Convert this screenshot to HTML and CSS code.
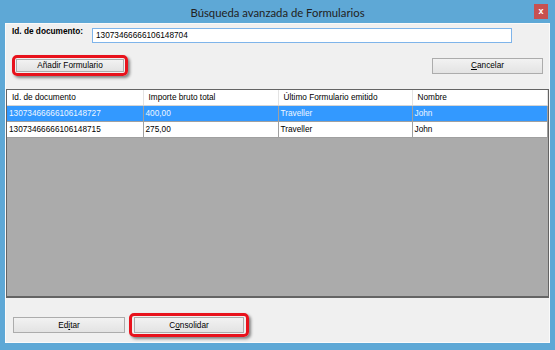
FILE: index.html
```html
<!DOCTYPE html>
<html>
<head>
    <title>Búsqueda avanzada de Formularios</title>
    <meta charset="utf-8" />
    <link rel="stylesheet" href="styles.css">
</head>
<body>
    <div class="window">
        <div class="titlebar">
            <span></span>
            <div class="title">Búsqueda avanzada de Formularios</div>
            <div class="close">x</div>
        </div>
        <div class="client">
            <div class="search-row">
                <label class="field-label" for="docid">Id. de documento:</label>
                <input id="docid" class="field" type="text" value="13073466666106148704" />
            </div>
            <div class="action-row">
                <div class="mark"><button class="btn btn-add">Añadir Formulario</button></div>
                <button class="btn btn-cancel"><u>C</u>ancelar</button>
            </div>
            <div class="grid">
                <table>
                    <colgroup>
                        <col class="c1" /><col class="c2" /><col class="c3" /><col />
                    </colgroup>
                    <thead>
                        <tr>
                            <th>Id. de documento</th>
                            <th>Importe bruto total</th>
                            <th>Último Formulario emitido</th>
                            <th>Nombre</th>
                        </tr>
                    </thead>
                    <tbody>
                        <tr class="selected">
                            <td>13073466666106148727</td>
                            <td>400,00</td>
                            <td>Traveller</td>
                            <td>John</td>
                        </tr>
                        <tr>
                            <td>13073466666106148715</td>
                            <td>275,00</td>
                            <td>Traveller</td>
                            <td>John</td>
                        </tr>
                    </tbody>
                </table>
            </div>
            <div class="footer">
                <button class="btn btn-edit">Ed<u>i</u>tar</button>
                <div class="mark mark-foot"><button class="btn btn-cons">C<u>o</u>nsolidar</button></div>
            </div>
        </div>
    </div>
</body>
</html>
```
FILE: styles.css
```css
html, body { margin:0; padding:0; }
body { width:555px; height:350px; overflow:hidden; font-family:"Liberation Sans", Arial, sans-serif; font-size:8.25px; }

.window { width:555px; height:350px; background-color:#5ea8d6; display:flex; flex-direction:column; }
.titlebar { height:23px; display:grid; grid-template-columns:1fr auto 1fr; align-items:center; }
.title { font-family:Lato, "Noto Sans", sans-serif; font-size:11.3px; color:#222; padding-top:1px; }
.close { justify-self:end; align-self:start; margin:4px 7px 0 0; width:14px; height:15px; background-color:#c75050; color:#fff; font-weight:bold; font-size:9px; line-height:14px; text-align:center; }

.client { margin:0 5px 0 5px; height:320px; box-sizing:border-box; border:1px solid #fafafa; background-color:#f0f0f0; display:flex; flex-direction:column; }

.search-row { display:flex; align-items:flex-start; padding-top:4px; }
.field-label { width:86px; padding:0 0 0 6px; box-sizing:border-box; font-weight:bold; color:#000; margin-top:-1px; }
.field { width:420px; height:15px; box-sizing:border-box; margin:0; padding:0 0 0 3px; border:1px solid #7eb4ea; font-family:inherit; font-size:8.25px; color:#000; outline:none; }

.action-row { display:flex; align-items:center; justify-content:space-between; margin-top:12px; padding:0 6px; }
.mark { border:3px solid #e8121c; border-radius:5px; padding:1px; box-shadow:2px 2px 3px rgba(0,0,0,0.45); display:flex; }

.btn { margin:0; padding:0; border:1px solid #acacac; background:linear-gradient(#f2f2f2, #e3e3e3); font-family:inherit; font-size:8.25px; color:#000; text-align:center; box-sizing:border-box; }
.btn u { text-decoration-thickness:1px; text-underline-offset:1px; }
.btn-add { width:108px; height:13px; line-height:10px; }
.btn-cancel { width:111px; height:16px; }
.btn-edit { width:112px; height:16px; margin-left:7px; }
.btn-cons { width:110px; height:16px; }

.grid { flex:1; margin-top:13px; border:1px solid #646464; border-bottom-width:2px; background-color:#ababab; overflow:hidden; }
.grid table { width:100%; border-collapse:collapse; table-layout:fixed; }
.grid col.c1 { width:136px; }
.grid col.c2 { width:135px; }
.grid col.c3 { width:134px; }
.grid th, .grid td { height:15px; padding:0; text-align:left; font-weight:normal; white-space:nowrap; overflow:hidden; }
.grid th { background-color:#fff; padding-left:5px; border-right:1px solid #e3e3e3; border-bottom:1px solid #d5d5d5; color:#000; }
.grid td { background-color:#fff; padding-left:2px; border-right:1px solid #a0a0a0; border-bottom:1px solid #a0a0a0; color:#000; }
.grid tr.selected td { background-color:#3399ff; color:#eef6ff; }

.footer { display:flex; align-items:center; padding:15px 0 5px 0; }
.mark-foot { margin-left:4px; padding:1px 2px; }
```
